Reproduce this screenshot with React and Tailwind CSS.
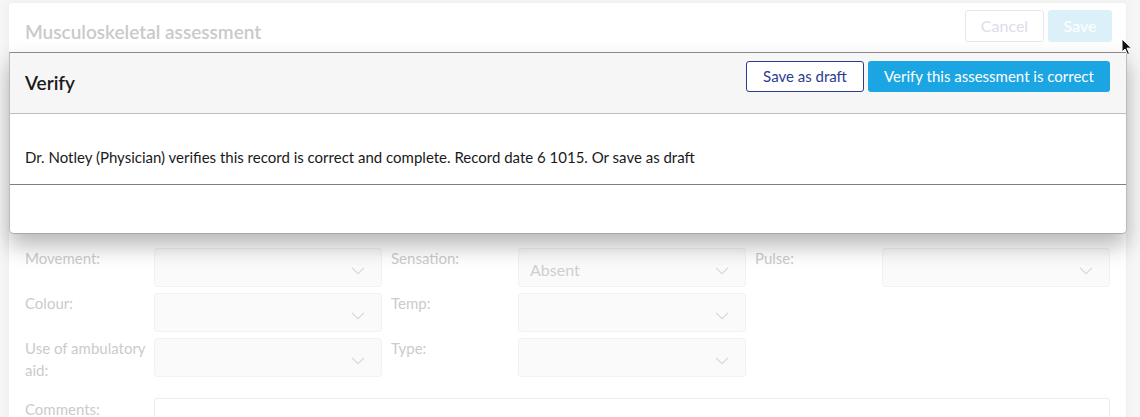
import { ChevronDown } from "lucide-react";

function FakeSelect({ value }) {
  return (
    <div className="h-[39px] bg-[#fafafa] border border-[#f2f2f2] rounded-[3px] flex items-center justify-between pl-[11px] pr-[12px] pt-[4px]">
      <span className="text-[16px] text-[#cfcfcf]">{value}</span>
      <ChevronDown size={22} strokeWidth={1.4} className="text-[#dcdcdc] mt-[2px]" />
    </div>
  );
}

function Label({ children, indent }) {
  return (
    <div className={`text-[15px] leading-[22px] text-[#cbcbcb] -mt-[1px] ${indent ? "pl-[9px]" : ""}`}>
      {children}
    </div>
  );
}

export default function App() {
  return (
    <div
      className="relative w-[1140px] h-[417px] overflow-hidden bg-[#f6f6f6]"
      style={{ fontFamily: "Lato, 'Open Sans', sans-serif" }}
    >
      {/* Background page card (faded) */}
      <div className="absolute left-[8px] top-[2px] w-[1119px] h-[440px] bg-white border border-[#f0f0f0] rounded-[3px] shadow-[0_0_8px_rgba(0,0,0,0.04)]">
        <div className="flex items-start justify-between pl-[16px] pr-[14px] pt-[7px] h-[50px]">
          <h1 className="text-[19px] font-semibold text-[#cacaca] mt-[8px]">Musculoskeletal assessment</h1>
          <div className="flex gap-[4px]">
            <button className="h-[32px] w-[79px] rounded-[3px] border border-[#e6e6ee] text-[16px] text-[#dcdcec] bg-white">
              Cancel
            </button>
            <button className="h-[32px] w-[64px] rounded-[3px] bg-[#dcf0fa] text-[16px] text-white">
              Save
            </button>
          </div>
        </div>

        <div className="pl-[16px] pr-[16px] pt-[195px]">
          <div className="grid grid-cols-[129px_228px_136px_228px_136px_228px] gap-y-[6px]">
            <Label>Movement:</Label>
            <FakeSelect />
            <Label indent>Sensation:</Label>
            <FakeSelect value="Absent" />
            <Label indent>Pulse:</Label>
            <FakeSelect />

            <Label>Colour:</Label>
            <FakeSelect />
            <Label indent>Temp:</Label>
            <FakeSelect />
            <div className="col-span-2" />

            <Label>
              Use of ambulatory
              <br />
              aid:
            </Label>
            <FakeSelect />
            <Label indent>Type:</Label>
            <FakeSelect />
            <div className="col-span-2" />
          </div>

          <div className="flex mt-[17px]">
            <div className="w-[129px] text-[15px] leading-[22px] text-[#cbcbcb]">Comments:</div>
            <div className="w-[956px] h-[60px] border border-[#ececec] rounded-[3px] bg-white" />
          </div>
        </div>
      </div>

      {/* Verify modal */}
      <div className="absolute left-[9px] top-[52px] w-[1118px] bg-white border border-t-[#8a8a8a] border-x-[#bdbdbd] border-b-[#a8a8a8] rounded-b-[5px] shadow-[0_12px_22px_rgba(0,0,0,0.28)] overflow-hidden">
        <div className="h-[61px] bg-[#f6f6f6] border-b border-[#bcbcbc] flex items-center justify-between pl-[15px] pr-[16px]">
          <h2 className="text-[19px] font-semibold text-[#1a1a1a] mt-[1px]">Verify</h2>
          <div className="flex gap-[4px] -mt-[14px]">
            <button className="h-[31px] w-[118px] rounded-[3px] border border-[#2c3b8f] bg-white text-[15px] text-[#2c3b8f]">
              Save as draft
            </button>
            <button className="h-[31px] w-[242px] rounded-[3px] bg-[#1ba5e2] text-[15px] text-white">
              Verify this assessment is correct
            </button>
          </div>
        </div>
        <div className="h-[71px] border-b border-[#7f7f7f] flex items-center pl-[15px] pt-[16px]">
          <p className="text-[15px] text-[#1a1a1a]">
            Dr. Notley (Physician) verifies this record is correct and complete. Record date 6 1015. Or save as draft
          </p>
        </div>
        <div className="h-[48px]" />
      </div>

      {/* Mouse cursor */}
      <svg className="absolute left-[1121px] top-[38px]" width="12" height="18" viewBox="0 0 12 18">
        <path d="M1 1 L1 14 L4 11 L6.5 16.5 L8.5 15.6 L6 10.2 L10.5 10.2 Z" fill="#111" stroke="#fff" strokeWidth="1" />
      </svg>
    </div>
  );
}
